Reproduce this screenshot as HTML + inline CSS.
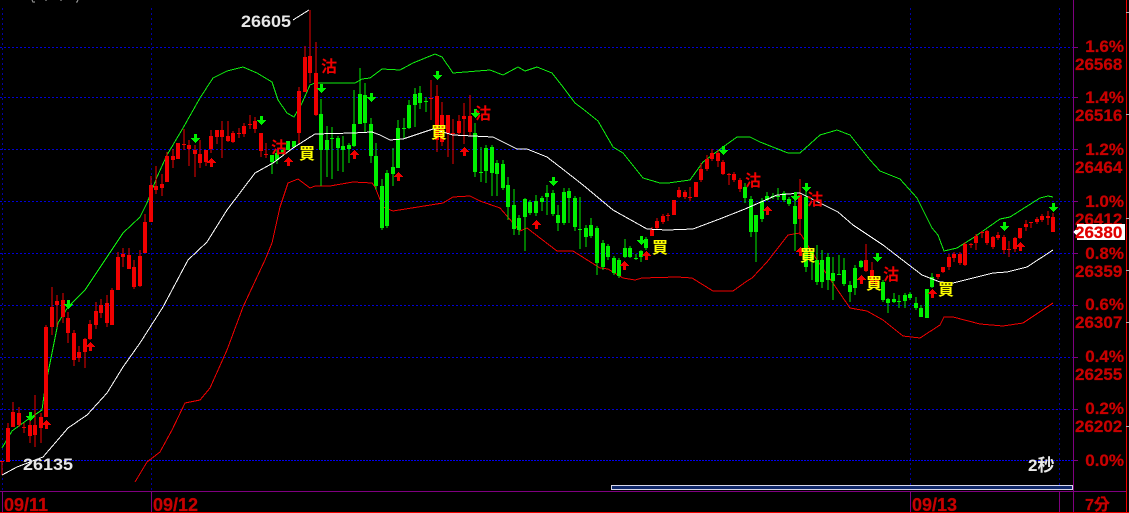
<!DOCTYPE html>
<html><head><meta charset="utf-8"><style>
html,body{margin:0;padding:0;background:#000;width:1129px;height:513px;overflow:hidden}
svg{display:block}
text{font-family:"Liberation Sans","WenQuanYi Zen Hei","Noto Sans CJK TC",sans-serif;font-weight:bold}
.r{fill:#c80000;font-size:17px;stroke:#c80000;stroke-width:.25}
.d{fill:#c80000;font-size:18px;stroke:#c80000;stroke-width:.25}
.e{text-anchor:end}
.w{fill:#e8e8e8;font-size:17px}
.c{font-size:16px;font-family:"WenQuanYi Zen Hei","Noto Sans CJK TC",sans-serif;text-anchor:middle;font-weight:bold}
</style></head><body>
<svg width="1129" height="513" viewBox="0 0 1129 513" xmlns="http://www.w3.org/2000/svg">
<defs>
<path id="dn" fill="#00f000" shape-rendering="crispEdges" d="M-1-5H2V-1H5V0H4V1H3V2H2V3H1V4H0V3H-1V2H-2V1H-3V0H-4V-1H-1Z"/>
<path id="up" fill="#f00000" shape-rendering="crispEdges" d="M-1 5H2V1H5V0H4V-1H3V-2H2V-3H1V-4H0V-3H-1V-2H-2V-1H-3V0H-4V1H-1Z"/>
</defs>
<rect width="1129" height="513" fill="#000"/>
<g stroke="#0000d8" stroke-width="1" stroke-dasharray="2 2" fill="none" shape-rendering="crispEdges">
<path d="M0 47.5H1073M0 97.5H1073M0 149.5H1073M0 201.5H1073M0 253.5H1073M0 305.5H1073M0 357.5H1073M0 409.5H1073"/>
<path d="M2.5 8V491M151.5 8V491M910.5 8V491M1059.5 8V491" stroke="#0000a8" stroke-dasharray="2 3"/>
</g>
<path d="M0 460.5H1073" stroke="#0000f0" stroke-width="1" stroke-dasharray="2 1" shape-rendering="crispEdges"/>
<g fill="none" stroke="#800080" stroke-width="1" shape-rendering="crispEdges">
<path d="M1073.5 0V513M0 491.5H1126M2.5 491V512M151.5 491V512M910.5 491V512M1059.5 491V512"/>
<path d="M1073 47.5H1078M1073 97.5H1078M1073 149.5H1078M1073 201.5H1078M1073 253.5H1078M1073 305.5H1078M1073 357.5H1078M1073 409.5H1078M1073 460.5H1078"/>
</g>
<path d="M1126.5 0V512M0 512.5H1129" stroke="#f00000" stroke-width="1" fill="none" shape-rendering="crispEdges"/>
<path d="M1126 12.5H1129M1126 114.5H1129M1126 218.5H1129M1126 270.5H1129M1126 322.5H1129M1126 426.5H1129" stroke="#b0b0b0" stroke-width="1" shape-rendering="crispEdges"/>
<rect x="611.5" y="485.5" width="461" height="4" fill="#10286a" stroke="#d8d8e8" shape-rendering="crispEdges"/>

<polyline fill="none" stroke="#f00000" stroke-width="1" shape-rendering="crispEdges" points="135,482 147,462 160,452 172,430 185,403 200,400 210,388 227,350 243,307 265,260 272,243 280,207 288,183 298,179 310,188 315,186 330,186 353,182 372,183 375,187 383,207 393,211 443,203 453,197 470,196 480,201 500,208 520,231 527,228 557,251 573,251 600,268 608,269 623,278 635,280 642,278 677,277 692,278 713,291 733,291 747,281 752,278 767,262 788,235 800,233 817,260 850,308 867,311 883,320 903,336 920,338 940,325 944,317 953,317 980,324 1003,326 1023,323 1053,303"/>
<polyline fill="none" stroke="#10f010" stroke-width="1" shape-rendering="crispEdges" points="2,448 12,431 27,420 42,410 45,388 52,353 58,323 68,307 85,290 105,260 123,233 140,217 147,203 157,177 167,155 183,128 200,98 213,78 227,71 243,67 257,73 272,82 278,100 287,113 294,117 302,103 310,85 315,83 355,83 362,79 370,78 382,69 400,70 413,63 435,54 442,57 453,73 490,70 503,75 518,67 525,71 537,67 552,73 563,87 575,103 583,109 598,121 613,147 623,153 643,178 660,183 668,183 690,180 703,162 723,147 737,137 750,137 760,142 788,153 800,153 820,135 837,130 850,135 870,160 880,171 900,179 917,198 932,228 938,235 944,251 957,248 973,238 1000,219 1010,217 1040,198 1048,196 1053,197"/>

<path fill="none" stroke="#f00000" stroke-width="1" shape-rendering="crispEdges" d="M2 461V475M8 423V462M13 402V427M19 407V427M24 423V433M30 416V443M35 395V447M41 413V443M46 325V417M52 287V335M57 295V327M63 293V323M68 312V343M74 330V366M79 346V362M85 338V368M90 320V340M96 302V329M101 299V318M107 295V327M112 288V325M118 252V290M123 248V267M129 248V269M134 260V289M140 250V287M145 214V253M151 176V222M156 166V194M162 174V196M167 152V182M173 149V168M178 143V159M184 129V150M189 140V166M195 145V177M200 140V168M206 150V166M211 130V153M217 130V144M222 121V158M228 121V142M233 131V143M239 128V138M244 123V137M250 115V129M255 117V133M261 133V157M266 143V158M299 87V144M305 46V92M310 10V83M316 42V116M431 80V120M437 85V152M442 102V146M448 115V157M453 119V164M459 115V135M464 103V144M470 95V136M652 227V236M657 218V230M663 214V224M668 213V221M674 200V215M679 187V198M685 190V199M690 187V201M696 182V197M701 163V182M707 155V171M712 149V161M718 150V167M723 160V175M729 173V185M734 172V182M740 178V192M800 179V235M866 244V272M872 262V285M877 278V287M938 274V279M943 267V273M949 254V270M954 252V262M960 252V265M965 242V266M971 243V248M976 234V250M982 231V238M987 230V245M993 236V249M998 232V240M1004 235V254M1009 241V257M1015 237V252M1020 228V239M1026 220V231M1031 222V228M1037 217V224M1042 214V222M1048 211V225M1053 213V232"/>
<path fill="none" stroke="#f00000" stroke-width="4" shape-rendering="crispEdges" d="M8 428V462M13 412V427M19 413V425M30 425V436M35 425V435M41 417V428M46 327V417M52 307V327M57 301V305M63 300V317M68 318V333M74 333V360M79 352V358M85 339V352M90 324V339M96 311V325M101 305V313M107 303V323M112 290V325M118 257V290M123 254V257M129 255V269M134 267V287M140 256V286M145 222V253M151 185V222M156 186V190M162 184V188M167 156V182M173 156V160M178 143V159M184 144V145M189 145V149M195 150V154M200 154V163M206 150V162M211 136V149M217 130V137M222 130V137M228 136V141M233 133V142M239 133V134M244 126V134M250 124V125M255 121V129M261 133V151M266 154V155M299 91V133M305 57V92M310 56V73M316 73V115M431 98V99M437 96V140M442 115V142M448 115V133M453 133V134M459 121V133M464 116V119M470 116V132M652 230V236M657 221V228M663 216V222M668 215V216M674 200V215M679 190V197M685 192V197M690 197V198M696 182V197M701 169V180M707 159V169M712 153V159M718 153V161M723 162V174M729 174V175M734 174V180M740 180V189M800 195V219M866 260V271M872 270V283M877 280V285M938 274V277M943 267V272M949 257V267M954 254V258M960 254V263M965 244V265M971 244V245M976 236V243M982 232V233M987 231V243M993 237V247M998 235V238M1004 237V250M1009 249V250M1015 238V249M1020 228V238M1026 224V227M1031 222V223M1037 219V222M1042 216V220M1048 216V218M1053 217V232M2 461V462M24 427V428"/>
<path fill="none" stroke="#00f000" stroke-width="1" shape-rendering="crispEdges" d="M272 155V174M277 150V164M283 148V156M321 99V186M327 126V177M332 127V179M338 136V171M343 136V172M349 143V163M354 90V147M360 68V124M365 83V133M371 118V163M376 143V190M382 179V230M387 170V228M393 148V186M398 120V168M404 118V139M409 100V129M415 88V127M420 86V109M426 97V112M475 123V177M481 147V182M486 145V183M492 145V196M497 160V196M503 160V190M508 177V220M514 189V235M519 215V235M525 198V251M530 200V215M536 195V216M542 196V211M547 185V215M553 190V216M558 205V231M564 188V225M569 188V223M575 196V231M580 197V249M586 225V247M591 218V238M597 226V275M603 240V270M608 244V260M614 256V275M619 258V278M625 239V258M630 246V258M636 254V260M641 250V262M646 237V250M745 183V203M751 196V237M756 215V262M762 198V222M767 192V201M773 193V199M778 188V200M784 191V202M789 197V206M795 194V251M806 190V272M812 251V280M817 245V285M822 250V288M828 253V290M833 257V300M839 255V275M844 258V286M850 281V302M855 265V295M861 260V268M883 280V302M888 298V313M894 293V303M899 295V308M905 293V308M910 292V300M916 297V310M921 305V317M927 289V318M932 273V288"/>
<path fill="none" stroke="#00f000" stroke-width="4" shape-rendering="crispEdges" d="M272 155V162M277 153V160M283 150V153M288 141V150M294 141V147M321 114V150M327 140V150M332 138V139M338 138V148M343 146V150M349 145V149M354 124V146M360 94V124M365 95V123M371 124V156M376 156V186M382 186V228M387 173V226M393 167V174M398 128V168M404 128V129M409 105V128M415 94V105M420 93V103M426 101V102M475 133V172M481 172V173M486 148V171M492 147V173M497 163V174M503 164V188M508 185V207M514 205V229M519 218V230M525 199V217M530 202V213M536 201V213M542 198V202M547 193V197M553 193V214M558 215V223M564 192V223M569 191V198M575 198V227M580 229V230M586 228V237M591 225V236M597 228V263M603 243V267M608 246V257M614 258V273M619 260V276M625 248V257M630 248V257M636 258V259M641 251V257M646 239V248M745 187V198M751 199V232M756 215V232M762 201V219M767 196V200M773 196V197M778 196V197M784 193V200M789 199V204M795 206V224M806 197V267M812 251V260M817 260V282M822 260V282M828 257V280M833 273V281M839 274V275M844 270V284M850 285V292M855 268V288M861 261V267M883 282V300M888 299V303M894 299V302M899 301V302M905 295V301M910 294V298M916 303V308M921 308V317M927 289V318M932 277V287"/>

<polyline fill="none" stroke="#fff" stroke-width="1" shape-rendering="crispEdges" points="2,475 17,467 43,457 68,428 87,415 107,393 123,367 140,343 163,307 188,260 207,242 227,210 255,173 273,163 293,148 315,134 353,133 372,132 380,135 390,140 403,139 433,129 453,135 493,137 517,149 527,149 547,157 560,167 583,185 613,210 647,229 667,230 693,229 717,220 745,209 777,195 800,193 838,212 853,225 883,245 922,275 940,282 953,283 993,273 1007,272 1027,267 1053,250"/>
<path d="M293 20L309 10" stroke="#fff" stroke-width="1" fill="none" shape-rendering="crispEdges"/>

<use href="#dn" x="30" y="417"/><use href="#dn" x="68" y="305"/><use href="#dn" x="195" y="139"/><use href="#dn" x="261" y="121"/><use href="#dn" x="321" y="89"/><use href="#dn" x="371" y="98"/><use href="#dn" x="437" y="76"/><use href="#dn" x="475" y="114"/><use href="#dn" x="553" y="182"/><use href="#dn" x="641" y="241"/><use href="#dn" x="723" y="151"/><use href="#dn" x="795" y="197"/><use href="#dn" x="806" y="188"/><use href="#dn" x="877" y="258"/><use href="#dn" x="1004" y="227"/><use href="#dn" x="1053" y="208"/>
<use href="#up" x="46" y="424"/><use href="#up" x="90" y="346"/><use href="#up" x="211" y="162"/><use href="#up" x="288" y="161"/><use href="#up" x="354" y="154"/><use href="#up" x="398" y="176"/><use href="#up" x="464" y="151"/><use href="#up" x="536" y="224"/><use href="#up" x="624" y="265"/><use href="#up" x="646" y="255"/><use href="#up" x="767" y="210"/><use href="#up" x="800" y="251"/><use href="#up" x="861" y="279"/><use href="#up" x="932" y="293"/><use href="#up" x="1020" y="246"/>

<text class="c" x="307" y="159" fill="#ffff00">買</text>
<text class="c" x="439" y="138" fill="#ffff00">買</text>
<text class="c" x="660" y="253" fill="#ffff00">買</text>
<text class="c" x="808" y="261" fill="#ffff00">買</text>
<text class="c" x="874" y="289" fill="#ffff00">買</text>
<text class="c" x="946" y="295" fill="#ffff00">買</text>
<text class="c" x="329" y="72" fill="#f00000">沽</text>
<text class="c" x="279" y="153" fill="#f00000">沽</text>
<text class="c" x="483" y="119" fill="#f00000">沽</text>
<text class="c" x="753" y="186" fill="#f00000">沽</text>
<text class="c" x="815" y="205" fill="#f00000">沽</text>
<text class="c" x="891" y="280" fill="#f00000">沽</text>

<text class="w" x="241" y="27" textLength="50" lengthAdjust="spacingAndGlyphs">26605</text>
<text class="w" x="23" y="470" textLength="50" lengthAdjust="spacingAndGlyphs">26135</text>
<text class="w" x="1028" y="471">2秒</text>

<g>
<text class="r e" x="1124" y="52">1.6%</text><text class="r" x="1075" y="70">26568</text>
<text class="r e" x="1124" y="103">1.4%</text><text class="r" x="1075" y="121">26516</text>
<text class="r e" x="1124" y="155">1.2%</text><text class="r" x="1075" y="173">26464</text>
<text class="r e" x="1124" y="207">1.0%</text><text class="r" x="1075" y="225">26412</text>
<text class="r e" x="1124" y="259">0.8%</text><text class="r" x="1075" y="277">26359</text>
<text class="r e" x="1124" y="310">0.6%</text><text class="r" x="1075" y="328">26307</text>
<text class="r e" x="1124" y="362">0.4%</text><text class="r" x="1075" y="380">26255</text>
<text class="r e" x="1124" y="414">0.2%</text><text class="r" x="1075" y="432">26202</text>
<text class="r e" x="1124" y="466">0.0%</text>
</g>
<path d="M1073 232L1077 228V224H1125V240H1077V236Z" fill="#fff" shape-rendering="crispEdges"/>
<text x="1075" y="238" fill="#e00000" stroke="#e00000" stroke-width=".25" style="font-size:17px">26380</text>

<text class="d" x="4" y="511">09/11</text>
<text class="d" x="153" y="511">09/12</text>
<text class="d" x="912" y="511">09/13</text>
<text class="r" x="1085" y="510" style="font-size:16px">7分</text>
<path d="M32 0l1 2h2M46 0v1M61 0v1M78 0l-1 2h-1" stroke="#b0b0b0" fill="none" shape-rendering="crispEdges"/>
</svg>
</body></html>
